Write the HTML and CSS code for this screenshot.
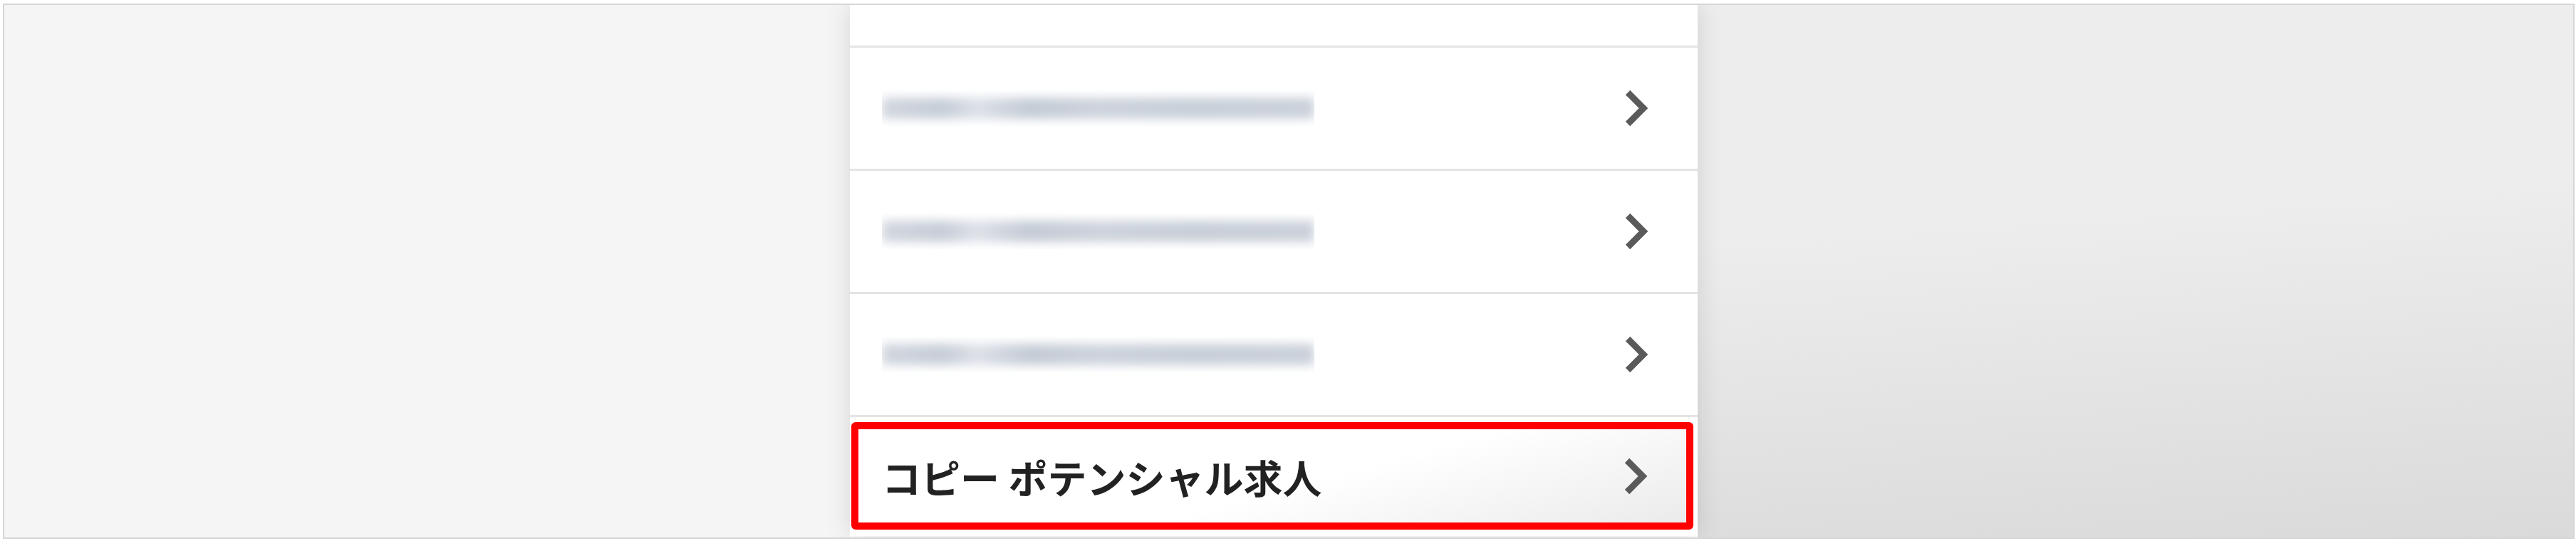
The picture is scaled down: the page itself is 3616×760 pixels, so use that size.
FILE: index.html
```html
<!DOCTYPE html>
<html lang="ja">
<head>
  <meta charset="UTF-8">
  <meta name="viewport" content="width=device-width, initial-scale=1.0">
  <title>メニュー</title>
  <link rel="stylesheet" href="styles.css">
</head>
<body>

<div class="frame">
  <div class="side side-left"></div>

  <div class="panel">
    <div class="row row-top"></div>

    <div class="row">
      <div class="masked"><div class="masked-bar"></div></div>
      <svg class="chevron" width="36" height="56" viewBox="0 0 36 56"><polyline points="6,6 28,28 6,50"/></svg>
    </div>

    <div class="row">
      <div class="masked"><div class="masked-bar"></div></div>
      <svg class="chevron" width="36" height="56" viewBox="0 0 36 56"><polyline points="6,6 28,28 6,50"/></svg>
    </div>

    <div class="row">
      <div class="masked"><div class="masked-bar"></div></div>
      <svg class="chevron" width="36" height="56" viewBox="0 0 36 56"><polyline points="6,6 28,28 6,50"/></svg>
    </div>

    <div class="row row-last">
      <div class="highlight">
        <span class="label">コピー ポテンシャル求人</span>
        <svg class="chevron" width="36" height="56" viewBox="0 0 36 56"><polyline points="6,6 28,28 6,50"/></svg>
      </div>
    </div>
  </div>

  <div class="side side-right"></div>
</div>

</body>
</html>
```

FILE: styles.css
```css
body {
  margin: 0;
  padding: 0;
  background: #fff;
  font-family: "Noto Sans CJK JP", "Noto Sans", sans-serif;
}
.frame {
  margin: 5px 2px 3px 4px;
  height: 748px;
  border: 2px solid #d6d6d6;
  display: grid;
  grid-template-columns: 1187px 1190px 1fr;
  overflow: hidden;
}
.side-left {
  background: #f5f5f5;
}
.side-right {
  background: linear-gradient(176deg, #ededed 40%, #dadada 100%);
}
.panel {
  position: relative;
  z-index: 1;
  background: #fff;
  display: flex;
  flex-direction: column;
  box-shadow: 0 0 34px rgba(0, 0, 0, 0.13);
  margin-bottom: 2px;
}
.row {
  height: 170px;
  flex-shrink: 0;
  border-bottom: 3px solid #e4e4e4;
  display: flex;
  align-items: center;
  justify-content: space-between;
  padding: 0 68px 0 45px;
}
.row-top {
  height: 57px;
}
.row-last {
  flex: 1;
  height: auto;
  border-bottom: none;
  padding: 7px 6px 9px 2px;
  align-items: stretch;
}
/* redacted entry names */
.masked {
  width: 607px;
  height: 50px;
  overflow: hidden;
  display: flex;
  align-items: center;
}
.masked-bar {
  width: 100%;
  height: 30px;
  filter: blur(7px);
  background: linear-gradient(90deg, #d2d7df 0%, #c6cdd7 14%, #dde1e8 22%, #c4cbd5 34%, #cdd3dc 50%, #c8cfd8 72%, #cbd1da 100%);
}
.chevron {
  flex-shrink: 0;
}
.chevron polyline {
  fill: none;
  stroke: #5a5a5a;
  stroke-width: 9;
  stroke-linejoin: miter;
}
.highlight {
  flex: 1;
  border: 10px solid #ff0000;
  border-radius: 6px;
  background: linear-gradient(165deg, #ffffff 55%, #ebebeb 100%);
  display: flex;
  align-items: center;
  justify-content: space-between;
  padding: 0 53px 0 33px;
}
.label {
  font-size: 55px;
  font-weight: 700;
  color: #222;
}
```
